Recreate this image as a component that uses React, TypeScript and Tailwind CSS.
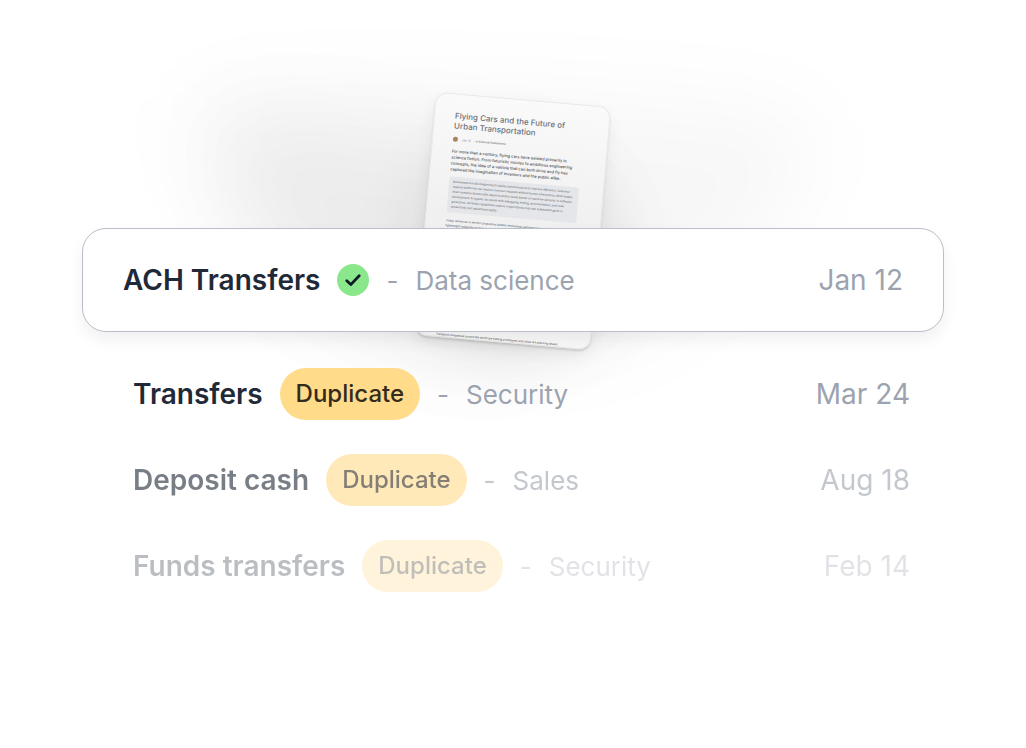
import * as React from 'react';

// Duplicate entries listed under the matched record
const duplicates = [
  { title: "Transfers", category: "Security", date: "Mar 24", fade: "opacity-100" },
  { title: "Deposit cash", category: "Sales", date: "Aug 18", fade: "opacity-60" },
  { title: "Funds transfers", category: "Security", date: "Feb 14", fade: "opacity-30" },
];

function Backdrop() {
  return (
    <svg
      className="absolute left-1/2 top-0 -translate-x-1/2"
      width="1026"
      height="480"
      viewBox="0 0 1026 480"
      aria-hidden="true"
    >
      <defs>
        <filter id="soft" x="-50%" y="-50%" width="200%" height="200%">
          <feGaussianBlur stdDeviation="42" />
        </filter>
        <filter id="near" x="-50%" y="-50%" width="200%" height="200%">
          <feGaussianBlur stdDeviation="28" />
        </filter>
      </defs>
      <path
        d="M200 100 C300 80 640 90 810 120 C830 170 760 260 660 320 C600 370 420 370 360 330 C260 290 180 200 200 100Z"
        fill="#000"
        fillOpacity="0.03"
        filter="url(#soft)"
      />
      <path
        d="M215 120 C290 110 380 130 520 150 C600 180 640 240 600 310 C500 380 420 360 340 310 C270 280 220 200 215 120Z"
        fill="#000"
        fillOpacity="0.045"
        filter="url(#soft)"
      />
      <ellipse cx="512" cy="250" rx="110" ry="110" fill="#000" fillOpacity="0.06" filter="url(#near)" />
    </svg>
  );
}

function Document() {
  return (
    <article className="relative flex h-61 w-44 shrink-0 rotate-5 flex-col overflow-hidden rounded-xl border border-[#e9e9ea] bg-gradient-to-b from-[#fafafa] via-[#f0f0f1] to-[#f8f8f8] px-5 pt-4 shadow-[0_2px_2px_rgba(0,0,0,0.12),0_6px_16px_rgba(0,0,0,0.06)]">
      <h1 className="text-[8px] leading-[10px] font-medium text-[#6b7078]">
        Flying Cars and the Future of
        <br />
        Urban Transportation
      </h1>
      <div className="mt-[6px] flex items-center gap-[2px] font-['Roboto',sans-serif] text-[3px] leading-[4px] text-[#777b82]">
        <span className="mr-[2px] size-[5px] rounded-full bg-[#a98465]"></span>
        <span>Jan 12</span>
        <span>·</span>
        <span className="font-medium">in External Statements</span>
      </div>
      <p className="mt-[7px] text-[4px] leading-[6px] font-medium whitespace-nowrap text-[#3f444c]">
        For more than a century, flying cars have existed primarily in
        <br />
        science fiction. From futuristic movies to ambitious engineering
        <br />
        concepts, the idea of a vehicle that can both drive and fly has
        <br />
        captured the imagination of inventors and the public alike.
      </p>
      <p className="mt-1 mr-1 rounded-xs bg-[#e5e6e9] px-1 py-[3px] font-['Roboto',sans-serif] text-[3px] leading-[5px] whitespace-nowrap text-[#5d626a]">
        Businesses are also beginning to deploy autonomous AI to improve efficiency. Customer
        <br />
        support platforms can resolve common requests without human intervention, while supply
        <br />
        chain systems dynamically adjust inventory levels based on real-time demand. In software
        <br />
        development, AI agents can assist with debugging, testing, documentation, and code
        <br />
        generation. As these capabilities mature, organizations may see substantial gains in
        <br />
        productivity and operational agility.
      </p>
      <p className="mt-[6px] font-['Roboto',sans-serif] text-[3px] leading-[5px] whitespace-nowrap text-[#4b5058]">
        Today, advances in electric propulsion, battery technology, autonomous navigation, and
        <br />
        lightweight materials are bringing the idea closer to reality than ever before.
      </p>
      <p className="mt-auto font-['Roboto',sans-serif] text-[3px] leading-[3px] whitespace-nowrap text-[#3f444c]">
        Transport companies around the world are testing prototypes, and cities are planning ahead
      </p>
    </article>
  );
}

function RouteComponent() {
  return (
    <main className="relative min-h-screen overflow-hidden bg-white font-['Inter',sans-serif]">
      <Backdrop />

      <div className="relative mx-auto w-full max-w-[862px] pt-[99px]">
        {/* Document sitting behind the card */}
        <div className="flex h-[129px] justify-center">
          <Document />
        </div>

        {/* Matched record */}
        <section className="relative flex h-26 items-center justify-between rounded-3xl border border-[#babec8] bg-white px-10 shadow-[0_8px_16px_rgba(0,0,0,0.06)]">
          <div className="flex items-center gap-[17px]">
            <h2 className="text-[28px] leading-8 font-semibold text-[#1f2937]">ACH Transfers</h2>
            <span className="flex size-8 items-center justify-center rounded-full bg-[#8be78b]">
              <svg className="size-4" viewBox="0 0 16 16" fill="none" aria-label="Verified">
                <path d="M1.8 8.8 5.8 12.6 14.2 3.8" stroke="#111827" strokeWidth="2.8" strokeLinecap="round" strokeLinejoin="round" />
              </svg>
            </span>
            <span className="pt-0.5 text-[26px] leading-8 text-[#9ca3af]">-</span>
            <span className="pt-0.5 text-[26px] leading-8 text-[#9ca3af]">Data science</span>
          </div>
          <time className="text-[28px] leading-8 text-[#9ca3af]">Jan 12</time>
        </section>

        <ul className="relative mt-9 flex flex-col gap-[34px] pr-[34px] pl-[51px]">
          {duplicates.map((item, index) => (
            <li key={index} className={`flex h-13 items-center justify-between ${item.fade}`}>
              <div className="flex items-center gap-[17px]">
                <h3 className="text-[28px] leading-8 font-semibold text-[#1f2937]">{item.title}</h3>
                <span className="rounded-full bg-[#ffdb8a] px-4 py-[10px] text-[24px] leading-8 font-medium text-[#332b1c]">
                  Duplicate
                </span>
                <span className="pt-0.5 text-[26px] leading-8 text-[#9ca3af]">-</span>
                <span className="pt-0.5 text-[26px] leading-8 text-[#9ca3af]">{item.category}</span>
              </div>
              <time className="text-[28px] leading-8 text-[#9ca3af]">{item.date}</time>
            </li>
          ))}
        </ul>
      </div>
    </main>
  );
}

export default RouteComponent;
